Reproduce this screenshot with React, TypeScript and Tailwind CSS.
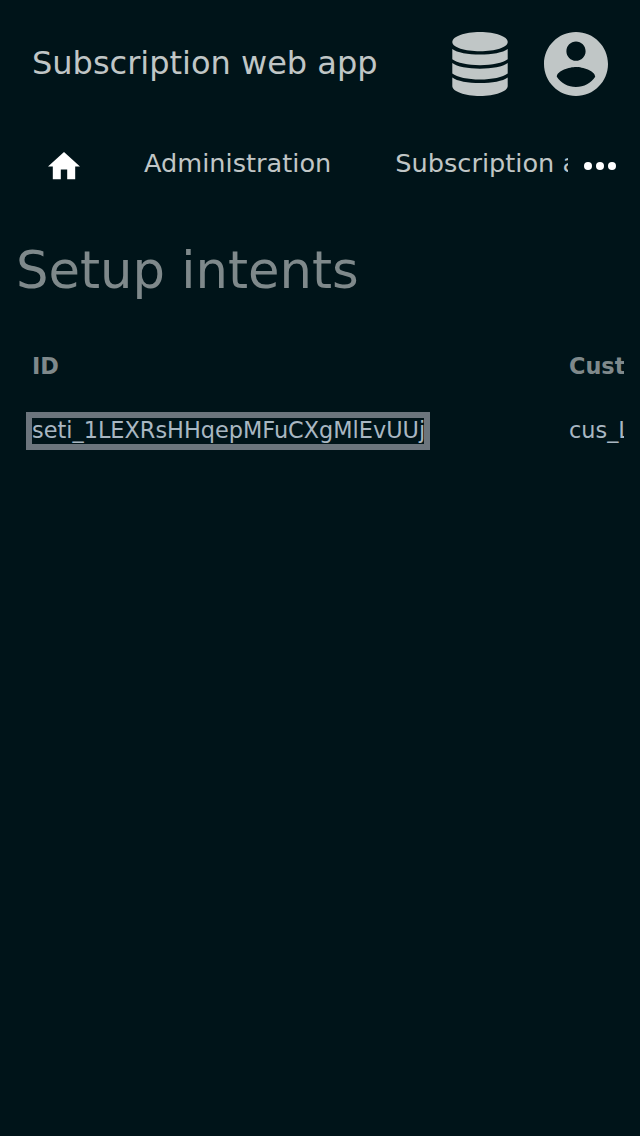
export default function App() {
  return (
    <div className="flex min-h-[1136px] w-full flex-col overflow-hidden bg-[#001419] font-['DejaVu_Sans',sans-serif]">
      <header className="flex h-32 items-center pr-8 pl-8 text-[#c0c6c6]">
        <div className="flex-1 pb-0.5 text-[32px] leading-none whitespace-nowrap">Subscription web app</div>
        <div className="flex items-center gap-9">
          <svg className="h-16 w-14" viewBox="0 0 56 64" fill="currentColor" aria-label="Database">
            <path d="M0.3 10C0.3 4.500 12.500 0 28 0S55.700 4.500 55.700 10C55.700 15.500 43 19.200 28 19.200S0.300 15.500 0.300 10Z" />
            <path d="M0.3 17C5 20.700 16 22.500 28 22.500S51 20.700 55.700 17V27.300C51 31 40 33.200 28 33.200S5 31 0.300 27.300Z" />
            <path d="M0.3 31C5 34.700 16 36.700 28 36.700S51 34.700 55.700 31V41.500C51 45.200 40 47.500 28 47.500S5 45.200 0.300 41.500Z" />
            <path d="M0.3 45.500C5 49.200 16 51 28 51S51 49.200 55.700 45.500V54C55.700 59.500 43 64 28 64S0.300 59.500 0.300 54Z" />
          </svg>
          <svg className="size-16" viewBox="2 2 20 20" fill="currentColor" aria-label="Account">
            <path d="M12 2C6.48 2 2 6.48 2 12s4.48 10 10 10 10-4.48 10-10S17.52 2 12 2zm0 3c1.66 0 3 1.34 3 3s-1.34 3-3 3-3-1.34-3-3 1.34-3 3-3zm0 14.2c-2.5 0-4.71-1.28-6-3.22.03-1.99 4-3.08 6-3.08 1.99 0 5.97 1.09 6 3.08-1.29 1.94-3.5 3.22-6 3.22z" />
          </svg>
        </div>
      </header>
      <nav className="flex h-[72px] items-center">
        <div className="flex w-[568px] items-center overflow-hidden pl-12 text-[25.6px] leading-[38px] whitespace-nowrap text-[#c0c6c6]">
          <svg className="mt-1 mr-16 h-[27.2px] w-8 shrink-0 text-white" viewBox="2 3 20 17" fill="currentColor" aria-label="Home">
            <path d="M10 20v-6h4v6h5v-8h3L12 3 2 12h3v8z" />
          </svg>
          <span className="mr-16 pb-0.5">Administration</span>
          <span className="pb-0.5">Subscription administration</span>
        </div>
        <svg className="mt-1 ml-4 h-2 w-8 shrink-0 text-white" viewBox="4 10 16 4" fill="currentColor" aria-label="More">
          <circle cx="6" cy="12" r="2" />
          <circle cx="12" cy="12" r="2" />
          <circle cx="18" cy="12" r="2" />
        </svg>
      </nav>
      <main className="px-4">
        <h1 className="mt-10 text-[51.2px] leading-[60px] text-[#7f898b]">Setup intents</h1>
        <div className="mt-[34px] overflow-hidden text-[22.4px] leading-8 whitespace-nowrap">
          <div className="flex h-16 items-center pl-4 font-bold text-[#7f898b]">
            <div className="w-[537px] shrink-0">ID</div>
            <div>Customer</div>
          </div>
          <div className="flex h-16 items-center pl-4 text-[#a9b7c2]">
            <div className="flex w-[537px] shrink-0 pt-0.5">
              <a className="block h-[26px] w-[392px] leading-6 outline-6 outline-[#6c757d]">
                <span className="block h-[26px] w-full overflow-hidden">seti_1LEXRsHHqepMFuCXgMlEvUUj</span>
              </a>
            </div>
            <div>cus_LwRkPb</div>
          </div>
        </div>
      </main>
    </div>
  );
}
